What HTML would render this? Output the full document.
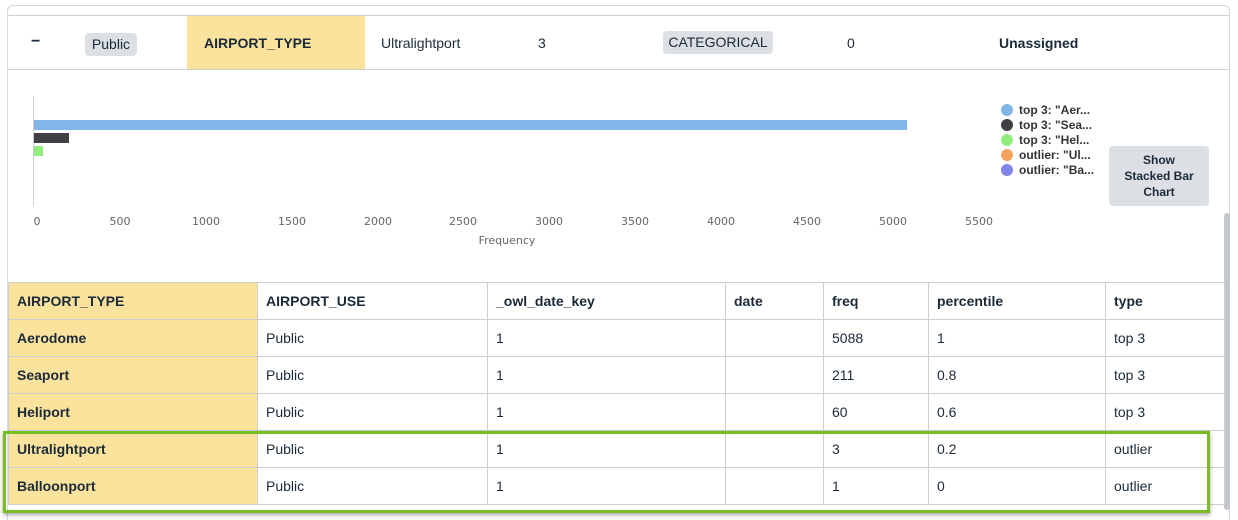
<!DOCTYPE html>
<html><head><style>
*{margin:0;padding:0;box-sizing:border-box}
html,body{width:1238px;height:520px;overflow:hidden}
body{background:#fff;font-family:"Liberation Sans",sans-serif;color:#1b2a38;position:relative;font-size:14px}
.a{position:absolute}
.b{font-weight:bold}
.badge{background:#dcdfe3;border-radius:4px;padding:0 6px;height:23px;line-height:23px}
td{border:1px solid #ccd0d5;height:37px;padding:0 8px;font-size:14px}
table{border-collapse:collapse;position:absolute;left:8px;top:282px;table-layout:fixed}
td.y{background:#fbe39e;font-weight:bold}
.tick{position:absolute;top:215px;font-size:11px;color:#666;transform:translateX(-50%);font-family:"DejaVu Sans",sans-serif}
.lg{position:absolute;left:1001px;font-size:12px;font-weight:bold;color:#333}
.lg i{display:inline-block;width:12px;height:12px;border-radius:50%;vertical-align:-2px;margin-right:6px}
</style></head><body>
<div class="a" style="left:7px;top:5px;width:1223px;height:515px;border:1px solid #d5d8dc;border-bottom:none;border-radius:6px 6px 0 0"></div>
<div class="a" style="left:8px;top:15px;width:1221px;height:1px;background:#ccd0d5"></div>
<div class="a" style="left:8px;top:69px;width:1221px;height:1px;background:#ccd0d5"></div>
<div class="a" style="left:187px;top:16px;width:178px;height:53px;background:#fbe39e"></div>
<div class="a b" style="left:31px;top:33px;font-size:16px">−</div>
<div class="a badge" style="left:85px;top:33px;width:52px;text-align:center">Public</div>
<div class="a b" style="left:204px;top:35px">AIRPORT_TYPE</div>
<div class="a" style="left:381px;top:35px">Ultralightport</div>
<div class="a" style="left:538px;top:35px">3</div>
<div class="a badge" style="left:663px;top:31px;width:110px;text-align:center;padding:0">CATEGORICAL</div>
<div class="a" style="left:847px;top:35px">0</div>
<div class="a b" style="left:999px;top:35px">Unassigned</div>

<div class="a" style="left:33px;top:96px;width:1px;height:110px;background:#ccd0d5"></div>
<div class="a" style="left:34px;top:120px;width:873px;height:10px;background:#82b6e8"></div>
<div class="a" style="left:34px;top:133px;width:35px;height:10px;background:#404045"></div>
<div class="a" style="left:34px;top:146px;width:9px;height:10px;background:#90ed7d"></div>
<div class="tick" style="left:37px">0</div>
<div class="tick" style="left:120px">500</div>
<div class="tick" style="left:206px">1000</div>
<div class="tick" style="left:292px">1500</div>
<div class="tick" style="left:378px">2000</div>
<div class="tick" style="left:463px">2500</div>
<div class="tick" style="left:549px">3000</div>
<div class="tick" style="left:635px">3500</div>
<div class="tick" style="left:721px">4000</div>
<div class="tick" style="left:807px">4500</div>
<div class="tick" style="left:893px">5000</div>
<div class="tick" style="left:979px">5500</div>
<div class="tick" style="left:507px;top:234px">Frequency</div>
<div class="lg" style="top:103px"><i style="background:#82b6e8"></i>top 3: "Aer...</div>
<div class="lg" style="top:118px"><i style="background:#404045"></i>top 3: "Sea...</div>
<div class="lg" style="top:133px"><i style="background:#90ed7d"></i>top 3: "Hel...</div>
<div class="lg" style="top:148px"><i style="background:#f4a15d"></i>outlier: "Ul...</div>
<div class="lg" style="top:163px"><i style="background:#8085e9"></i>outlier: "Ba...</div>
<div class="a b" style="left:1109px;top:146px;width:100px;height:60px;background:#dcdfe3;border-radius:4px;font-size:12px;text-align:center;line-height:16px;padding-top:6px">Show<br>Stacked Bar<br>Chart</div>
<div class="a" style="left:1224px;top:213px;width:6px;height:297px;background:#c3c7cb;border-radius:3px"></div>

<table>
<colgroup><col style="width:249px"><col style="width:230px"><col style="width:238px"><col style="width:98px"><col style="width:105px"><col style="width:177px"><col style="width:119px"></colgroup>
<tr><td class="y">AIRPORT_TYPE</td><td class="b">AIRPORT_USE</td><td class="b">_owl_date_key</td><td class="b">date</td><td class="b">freq</td><td class="b">percentile</td><td class="b">type</td></tr>
<tr><td class="y">Aerodome</td><td>Public</td><td>1</td><td></td><td>5088</td><td>1</td><td>top 3</td></tr>
<tr><td class="y">Seaport</td><td>Public</td><td>1</td><td></td><td>211</td><td>0.8</td><td>top 3</td></tr>
<tr><td class="y">Heliport</td><td>Public</td><td>1</td><td></td><td>60</td><td>0.6</td><td>top 3</td></tr>
<tr><td class="y">Ultralightport</td><td>Public</td><td>1</td><td></td><td>3</td><td>0.2</td><td>outlier</td></tr>
<tr><td class="y">Balloonport</td><td>Public</td><td>1</td><td></td><td>1</td><td>0</td><td>outlier</td></tr>
</table>
<div class="a" style="left:3px;top:431px;width:1207px;height:82px;border:3px solid #78be20;box-shadow:0 2px 4px rgba(0,0,0,.35)"></div>
</body></html>
